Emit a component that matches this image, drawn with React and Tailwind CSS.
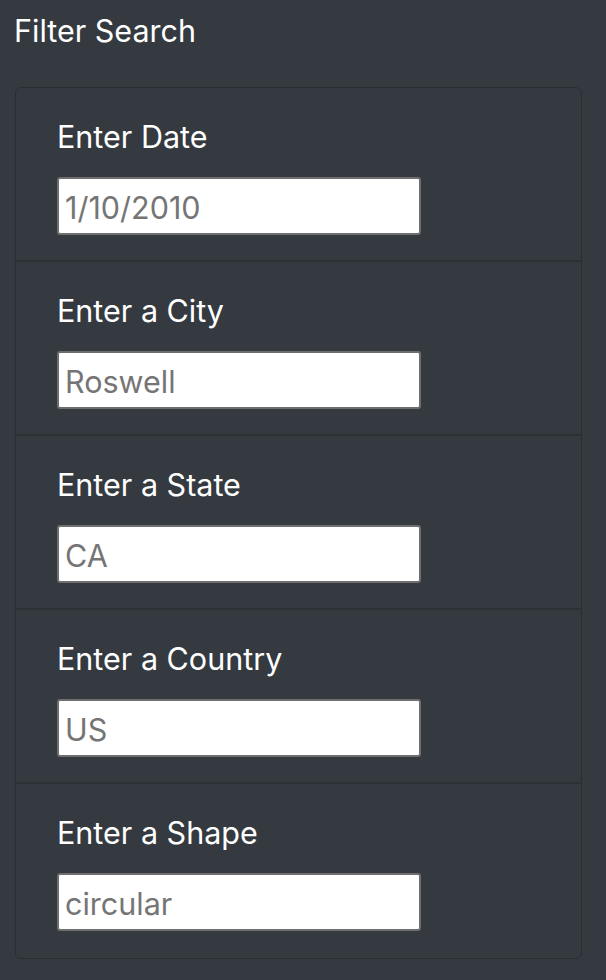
export default function App() {
  const rows = [
    ["Enter Date", "1/10/2010"],
    ["Enter a City", "Roswell"],
    ["Enter a State", "CA"],
    ["Enter a Country", "US"],
    ["Enter a Shape", "circular"],
  ];
  return (
    <div className="min-h-[980px] w-[606px] bg-[#343a40] font-['Inter',sans-serif] text-white">
      <div className="px-[15px] pt-[12px] pb-[24px]">
        <h5 className="text-[30.5px] leading-[38px] ml-[-1px] mb-[37px]">Filter Search</h5>
        <div className="rounded-[6px] border border-[#2a2f34] mr-[9px]">
          {rows.map(([label, value], i) => (
            <div
              key={label}
              className={`h-[174px] px-[41px] pt-[29px] ${i < rows.length - 1 ? "border-b-2 border-[#2c3136]" : ""}`}
            >
              <label className="block text-[30.5px] leading-[40px]">{label}</label>
              <input
                defaultValue={value}
                className="mt-[20px] h-[58px] w-[364px] rounded-[3px] border-2 border-[#6e6e6e] bg-white px-[6px] pt-[2px] text-[30.5px] text-[#757575] outline-none"
              />
            </div>
          ))}
        </div>
      </div>
    </div>
  );
}
